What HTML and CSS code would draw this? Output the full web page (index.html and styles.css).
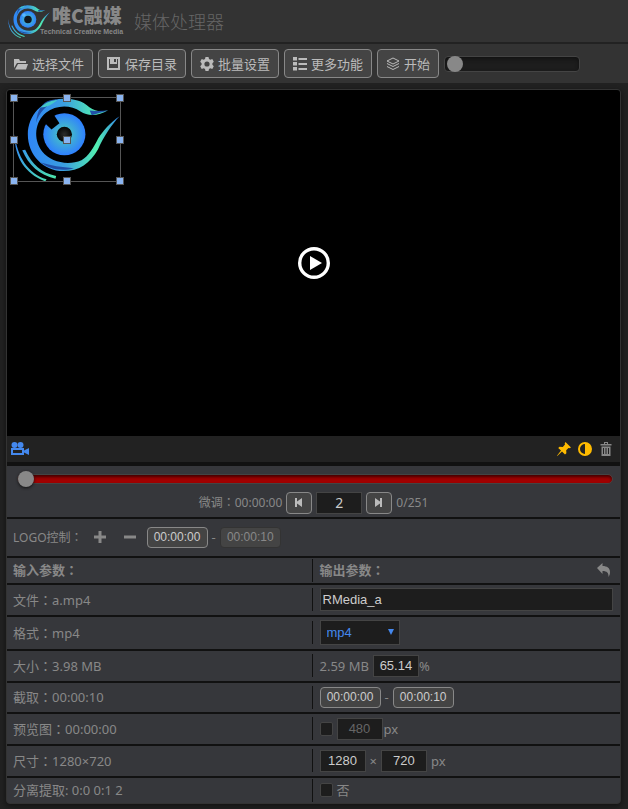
FILE: index.html
```html
<!DOCTYPE html>
<html lang="zh-CN">
<head>
<meta charset="utf-8">
<meta name="viewport" content="width=device-width, initial-scale=1">
<title>媒体处理器</title>
<link rel="stylesheet" href="styles.css">
</head>
<body>
<svg class="defs" aria-hidden="true">
  <defs>
    <linearGradient id="ring" x1="0" y1="0" x2="1" y2="0">
      <stop offset="0" stop-color="#2f86f6"/><stop offset=".4" stop-color="#3b9fe0"/><stop offset=".75" stop-color="#52efb0"/><stop offset="1" stop-color="#2f7fe8"/>
    </linearGradient>
    <linearGradient id="trail" x1="0" y1="0" x2="1" y2="1">
      <stop offset="0" stop-color="#2f80ff"/><stop offset="1" stop-color="#4fe8a8"/>
    </linearGradient>
    <radialGradient id="iris">
      <stop offset=".3" stop-color="#43b8cc"/><stop offset="1" stop-color="#2f80ff"/>
    </radialGradient>
    <radialGradient id="pupil">
      <stop offset="0" stop-color="#2c2c2c"/><stop offset="1" stop-color="#050505"/>
    </radialGradient>
    <symbol id="eye" viewBox="40 40 322 252">
      <path fill="url(#ring)" d="M326 77C303 83 287 80 269 68C247 47 222 42 188 42C125 45 82 93 82 150C82 214 130 262 190 262C238 262 272 237 295 196C312 158 338 118 361 95C333 113 310 140 296 162C282 190 266 217 245 229C205 246 152 236 125 202C97 163 104 112 137 85C168 60 212 60 242 81C265 97 298 94 326 77Z"/>
      <path fill="#2050a8" d="M107 116C116 82 139 62 172 43L150 47C126 54 110 75 107 116ZM122 236C145 256 188 264 222 253C185 251 151 245 122 236ZM276 92L325 78C305 79 287 80 270 78Z"/>
      <path fill="#45c9c8" d="M120 69C140 50 155 48 172 46C157 60 139 68 120 69Z"/>
      <circle cx="193" cy="150" r="64" fill="url(#iris)"/>
      <path fill="url(#trail)" d="M42 149C49 217 82 269 139 287L135 293C73 271 40 218 42 149ZM65 199L74 197C95 242 123 267 168 277L166 285C117 275 84 244 65 199Z"/>
    </symbol>
  </defs>
</svg>

<header class="brand">
  <svg class="brand-eye" viewBox="40 40 322 252"><use href="#eye" x="40" y="40" width="322" height="252"/><circle cx="193" cy="150" r="29" fill="#101820"/><circle cx="162" cy="116" r="14" fill="#59b6ff"/></svg>
  <div class="brand-text">
    <span class="brand-name">唯C融媒</span>
    <span class="brand-sub">Technical Creative Media</span>
  </div>
  <h1>媒体处理器</h1>
</header>

<nav class="toolbar">
  <button class="tool" type="button"><svg viewBox="0 0 14 14"><path d="M0 11V2h5l1 2h6v2H3zM4 7h10l-2 5.500H1z"/></svg>选择文件</button>
  <button class="tool" type="button"><svg viewBox="0 0 14 14"><path fill-rule="evenodd" d="M0 0h13v13H0zM2 2v9h9V2h-1v5H3V2zm5 0v3h2V2z"/></svg>保存目录</button>
  <button class="tool" type="button"><svg viewBox="0 0 14 14"><path fill-rule="evenodd" d="M5.500 0h3l.5 2 1.300.7 2-.6 1.500 2.700L12.400 6.200v1.600l1.400 1.400-1.500 2.700-2-.6L9 12l-.5 2h-3L5 12l-1.300-.7-2 .6L.2 9.200l1.400-1.400V6.200L.2 4.800l1.500-2.700 2 .6L5 2zM7 4.400a2.600 2.600 0 100 5.200 2.600 2.600 0 000-5.200z"/></svg>批量设置</button>
  <button class="tool" type="button"><svg viewBox="0 0 14 14"><path d="M0 0h4v3.500H0zM0 5h4v3.500H0zM0 10h4v3.500H0zM5.500 1H14v2H5.500zM5.500 6H14v2H5.500zM5.500 11H14v2H5.500z"/></svg>更多功能</button>
  <button class="tool" type="button"><svg class="line" viewBox="0 0 14 14"><path d="M7 1l6 3-6 3-6-3zM1 6.500l6 3 6-3M1 9.500l6 3 6-3"/></svg>开始</button>
  <input class="progress" type="range" min="0" max="100" value="0" aria-label="进度">
</nav>

<main class="panel">
  <section class="video">
    <div class="overlay">
      <svg class="overlay-eye" viewBox="40 40 322 252"><use href="#eye" x="40" y="40" width="322" height="252"/><circle cx="193" cy="150" r="23" fill="url(#pupil)"/><path fill="#000" d="M134 117L154 136L178 117L158 86Z"/></svg>
      <i class="handle top left"></i><i class="handle top center"></i><i class="handle top right"></i>
      <i class="handle middle left"></i><i class="handle middle center"></i><i class="handle middle right"></i>
      <i class="handle bottom left"></i><i class="handle bottom center"></i><i class="handle bottom right"></i>
    </div>
    <button class="play" type="button" aria-label="播放"><svg viewBox="0 0 32 32"><circle cx="16" cy="16" r="14.300"/><path d="M12 9l12 7-12 7z"/></svg></button>
  </section>

  <div class="video-bar">
    <button class="icon-btn camera" type="button" aria-label="录像"><svg viewBox="0 0 18 14"><circle cx="3.500" cy="3" r="3"/><circle cx="9.500" cy="3" r="3"/><path fill-rule="evenodd" d="M0 6h13v2.500L18 6v7l-5-2.500V13H0zM2 8v3h9V8z"/></svg></button>
    <div class="video-tools">
      <button class="icon-btn amber" type="button" aria-label="固定"><svg viewBox="0 0 14 14"><path d="M8.500 0L14 5.500l-1.500.7-1-.3-2.300 2.300.2 3-1.400 1.200L5 9.500.3 14 0 13.700 4 8.600 1.200 6l1.400-1.300 3.200.2L8 2.500l-.3-1.200z"/></svg></button>
      <button class="icon-btn amber" type="button" aria-label="对比度"><svg viewBox="0 0 14 14"><path fill-rule="evenodd" d="M7 0a7 7 0 100 14A7 7 0 007 0zm0 2v10A5 5 0 017 2z"/></svg></button>
      <button class="icon-btn" type="button" aria-label="删除"><svg viewBox="0 0 14 14"><path fill-rule="evenodd" d="M1.500 2H5V0h4v2h3.500v1.500h-11zM6 1v1h2V1zM2.500 4.500h9V14h-9zM4 6v6h1V6zm2.500 0v6h1V6zM9 6v6h1V6z"/></svg></button>
    </div>
  </div>

  <section class="seek">
    <input class="timeline" type="range" min="0" max="251" value="0" aria-label="时间轴">
    <div class="fine">
      <label for="frame">微调<span class="colon" lang="zh-TW">：</span>00:00:00</label>
      <button class="step" type="button" aria-label="上一帧"><svg viewBox="0 0 8 9"><path d="M0 0h2v3.500L7 0v9L2 5.500V9H0z"/></svg></button>
      <input class="field number frame" id="frame" type="text" value="2">
      <button class="step" type="button" aria-label="下一帧"><svg viewBox="0 0 8 9"><path d="M7 0H5v3.500L0 0v9l5-3.500V9h2z"/></svg></button>
      <span>0/251</span>
    </div>
  </section>

  <section class="logo-row">
    <span class="logo-label">LOGO控制<span class="colon" lang="zh-TW">：</span></span>
    <button class="icon-btn" type="button" aria-label="添加"><svg viewBox="0 0 14 14"><path d="M5.500 1h3v4.500H13v3H8.500V13h-3V8.500H1v-3h4.500z"/></svg></button>
    <button class="icon-btn" type="button" aria-label="移除"><svg viewBox="0 0 14 14"><path d="M1 5.500h12v3H1z"/></svg></button>
    <div class="range">
      <button class="time" type="button">00:00:00</button><span>-</span><button class="time" type="button" disabled>00:00:10</button>
    </div>
  </section>

  <table class="params">
    <thead>
      <tr class="compact">
        <th scope="col">输入参数<span class="colon" lang="zh-TW">：</span></th>
        <th scope="col"><div class="out split"><span>输出参数<span class="colon" lang="zh-TW">：</span></span><button class="icon-btn undo" type="button" aria-label="还原"><svg viewBox="0 0 14 14"><path d="M0 5l5.500-5v3C10 3 13 5 13 9c0 2-.5 3.500-1.500 5 .3-4-1.500-6-6-6v3z"/></svg></button></div></th>
      </tr>
    </thead>
    <tbody>
      <tr>
        <td>文件<span class="colon" lang="zh-TW">：</span>a.mp4</td>
        <td><div class="out"><input class="field name" type="text" value="RMedia_a" aria-label="输出文件名"></div></td>
      </tr>
      <tr class="tall">
        <td><label for="format">格式<span class="colon" lang="zh-TW">：</span>mp4</label></td>
        <td><div class="out"><div class="select"><select id="format"><option>mp4</option></select></div></div></td>
      </tr>
      <tr>
        <td><label for="rate">大小<span class="colon" lang="zh-TW">：</span>3.98 MB</label></td>
        <td><div class="out"><span>2.59 MB</span><input class="field number after-text" id="rate" type="text" value="65.14"><span>%</span></div></td>
      </tr>
      <tr class="times">
        <td>截取<span class="colon" lang="zh-TW">：</span>00:00:10</td>
        <td><div class="out"><div class="range"><button class="time" type="button">00:00:00</button><span>-</span><button class="time" type="button">00:00:10</button></div></div></td>
      </tr>
      <tr>
        <td><label for="preview">预览图<span class="colon" lang="zh-TW">：</span>00:00:00</label></td>
        <td><div class="out"><input class="check" id="preview" type="checkbox"><input class="field number after-text" type="text" value="480" disabled aria-label="预览图宽度"><span class="unit">px</span></div></td>
      </tr>
      <tr>
        <td><label for="width">尺寸<span class="colon" lang="zh-TW">：</span>1280×720</label></td>
        <td><div class="out size"><input class="field number" id="width" type="text" value="1280"><span>×</span><input class="field number" type="text" value="720" aria-label="高度"><span>px</span></div></td>
      </tr>
      <tr class="compact">
        <td>分离提取: 0:0 0:1 2</td>
        <td><div class="out"><input class="check" id="extract" type="checkbox"><label class="after-text" for="extract">否</label></div></td>
      </tr>
    </tbody>
  </table>
</main>
</body>
</html>
```

FILE: styles.css
```css
* {
  box-sizing: border-box;
}

body {
  margin: 0;
  background: #222;
  color: #888;
  font: 13px/18px "Noto Sans", "Noto Sans CJK SC", sans-serif;
}

button,
input,
select {
  margin: 0;
  font: inherit;
  color: inherit;
}

svg {
  display: block;
  fill: currentColor;
}

.defs {
  position: absolute;
  width: 0;
  height: 0;
}

.colon {
  font-family: "Noto Sans CJK TC", sans-serif;
}

/* header */
.brand {
  display: flex;
  align-items: center;
  height: 44px;
  padding-left: 8px;
  background: #333;
  border-bottom: 2px solid #222;
}

.brand-eye {
  width: 42px;
  height: 33px;
}

.brand-text {
  display: flex;
  flex-direction: column;
  width: 84px;
  margin-left: -10px;
  white-space: nowrap;
}

.brand-name {
  padding-left: 12px;
  font: 900 19px/22px "Noto Sans CJK SC", sans-serif;
}

.brand-sub {
  font: bold 7px/12px "Liberation Sans", sans-serif;
}

.brand h1 {
  margin: 0 0 0 10px;
  color: #666;
  font: 300 18px/24px "Noto Sans CJK SC", sans-serif;
}

/* toolbar */
.toolbar {
  display: flex;
  align-items: center;
  gap: 5px;
  height: 39px;
  padding: 0 5px;
  background: #333;
}

.tool {
  display: flex;
  align-items: center;
  gap: 4px;
  height: 29px;
  padding: 0 8px;
  background: #444;
  border: 1px solid #888;
  border-radius: 4px;
  color: #bbb;
  font-size: 13px;
  white-space: nowrap;
}

.tool svg {
  width: 14px;
  height: 14px;
}

.tool .line {
  fill: none;
  stroke: currentColor;
}

input[type="range"] {
  display: block;
  appearance: none;
  border: 1px solid #444;
}

input[type="range"]::-webkit-slider-thumb {
  appearance: none;
  width: 16px;
  height: 16px;
  border-radius: 50%;
  background: #888;
}

.progress {
  width: 136px;
  height: 16px;
  padding: 0 2px;
  background: #1d1d1d;
  border-radius: 4px;
  box-shadow: inset 0 2px 4px #111;
}

/* main panel */
.panel {
  margin: 6px 7px 6px 6px;
  overflow: hidden;
  background: #36373b;
  border: 1px solid #333;
  border-radius: 4px;
  box-shadow: 0 2px 6px #111;
}

.video {
  position: relative;
  display: flex;
  align-items: center;
  justify-content: center;
  aspect-ratio: 39 / 22;
  background: #000;
}

.overlay {
  position: absolute;
  top: 7px;
  left: 6px;
  width: 108px;
  height: 85px;
  border: 1px solid #555;
}

.overlay-eye {
  width: 100%;
  height: 100%;
}

.handle {
  position: absolute;
  width: 8px;
  height: 8px;
  background: #8ab4f0;
  border: 1px solid #555;
}

.handle.top { top: -4px; }
.handle.middle { top: 38px; }
.handle.bottom { bottom: -4px; }
.handle.left { left: -4px; }
.handle.center { left: 49px; }
.handle.right { right: -4px; }

.play,
.icon-btn {
  padding: 0;
  background: none;
  border: 0;
}

.play {
  color: #fff;
}

.play svg {
  width: 32px;
  height: 32px;
}

.play circle {
  fill: none;
  stroke: currentColor;
  stroke-width: 3.4;
}

.icon-btn svg {
  width: 14px;
  height: 14px;
}

.icon-btn.amber {
  color: #fb0;
}

.icon-btn.camera {
  color: #48e;
}

.icon-btn.camera svg {
  width: 18px;
}

.video-bar {
  display: flex;
  align-items: center;
  justify-content: space-between;
  height: 26px;
  padding: 0 7px 0 4px;
  background: #222;
}

.video-tools {
  display: flex;
  gap: 7px;
}

.seek {
  padding: 8px 7px 3px;
  border-top: 4px solid #111;
}

.timeline {
  width: calc(100% - 3px);
  height: 10px;
  margin-left: 3px;
  background: #a00000;
  border-radius: 5px;
  box-shadow: inset 0 2px 3px #400;
}

.timeline::-webkit-slider-thumb {
  box-shadow: 0 1px 3px #111;
}

.fine {
  display: flex;
  align-items: center;
  justify-content: center;
  gap: 4px;
  margin-top: 8px;
  font-size: 12px;
}

.step {
  display: flex;
  align-items: center;
  justify-content: center;
  width: 26px;
  height: 22px;
  padding: 0;
  background: #444;
  border: 1px solid #888;
  border-radius: 4px;
  color: #bbb;
}

.step svg {
  width: 8px;
  height: 9px;
}

.field {
  height: 22px;
  padding: 0 2px;
  background: #1d1d1d;
  border: 1px solid #444;
  color: #ccc;
  font: 13px "Liberation Sans", sans-serif;
}

.field:disabled {
  color: #666;
}

.number {
  width: 46px;
  text-align: center;
}

.frame {
  font: 14px "Noto Sans", sans-serif;
}

.name {
  width: 100%;
  height: 23px;
}

.logo-row {
  display: flex;
  align-items: center;
  gap: 16px;
  height: 39px;
  padding: 0 6px;
  border-top: 2px solid #111;
}

.logo-label {
  margin-right: -6px;
  font-size: 12px;
}

.logo-row .range {
  margin-left: -6px;
}

.range {
  display: flex;
  align-items: center;
  gap: 4px;
}

.time {
  width: 61px;
  height: 21px;
  padding: 0;
  background: #444;
  border: 1px solid #888;
  border-radius: 4px;
  color: #ccc;
  font: 12px "Liberation Sans", sans-serif;
}

.time:disabled {
  border-color: #333;
  color: #888;
}

/* parameters */
.params {
  width: 100%;
  table-layout: fixed;
  border-spacing: 0;
}

.params tr {
  height: 32px;
}

.params tr.compact {
  height: 27px;
}

.params tr.tall {
  height: 34px;
}

.params tr.times {
  height: 31px;
}

.params th,
.params td {
  padding: 0 7px 0 6px;
  border-top: 2px solid #111;
  text-align: left;
}

.params th + th,
.params td + td {
  padding-left: 0;
}

.out {
  display: flex;
  align-items: center;
  height: 23px;
  margin-left: -2px;
  padding-left: 7px;
  border-left: 1px solid #111;
}

.split {
  justify-content: space-between;
}

.undo {
  padding-right: 2px;
}

.after-text {
  margin-left: 4px;
}

.unit {
  margin-left: 1px;
}

.size {
  gap: 4px;
}

.select {
  position: relative;
  width: 80px;
  color: #48e;
}

.select::after {
  content: "";
  position: absolute;
  top: 9px;
  right: 6px;
  border: 3px solid transparent;
  border-top: 6px solid;
  border-bottom: 0;
  pointer-events: none;
}

.select select {
  display: block;
  appearance: none;
  width: 100%;
  height: 25px;
  padding: 0 6px;
  background: #1d1d1d;
  border: 1px solid #444;
  border-radius: 0;
  font: 13px "Liberation Sans", sans-serif;
}

.check {
  appearance: none;
  width: 13px;
  height: 14px;
  background: #1d1d1d;
  border: 1px solid #444;
  border-radius: 2px;
}
```
